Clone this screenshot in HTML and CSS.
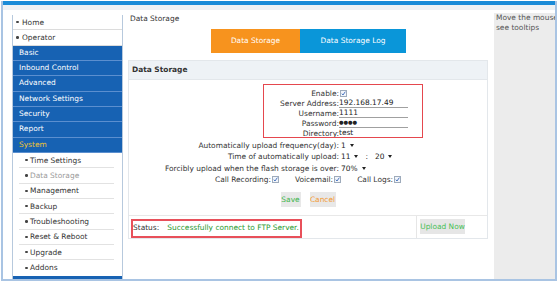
FILE: index.html
```html
<!DOCTYPE html>
<html>
<head>
<meta charset="utf-8">
<link rel="stylesheet" href="styles.css">
</head>
<body>
<div class="screen">
  <div class="topbar"></div>
  <div class="topstrip"></div>
  <div class="content">
    <nav class="sidebar">
      <div class="item top">Home</div>
      <div class="item top">Operator</div>
      <div class="group">Basic</div>
      <div class="group">Inbound Control</div>
      <div class="group">Advanced</div>
      <div class="group">Network Settings</div>
      <div class="group">Security</div>
      <div class="group">Report</div>
      <div class="group active">System</div>
      <div class="item sub">Time Settings</div>
      <div class="item sub current">Data Storage</div>
      <div class="item sub">Management</div>
      <div class="item sub">Backup</div>
      <div class="item sub">Troubleshooting</div>
      <div class="item sub">Reset &amp; Reboot</div>
      <div class="item sub">Upgrade</div>
      <div class="item sub last">Addons</div>
      <div class="group"></div>
    </nav>
    <main class="main">
      <div class="title">Data Storage</div>
      <div class="tabs">
        <div class="tab on">Data Storage</div>
        <div class="tab log">Data Storage Log</div>
      </div>
      <section class="panel">
        <div class="panel-head">Data Storage</div>
        <div class="panel-body">
          <div class="row"><span class="l">Enable:</span><span class="v"><span class="cb first"><svg viewBox="0 0 6 6"><path d="M1 3.2 L2.4 4.8 L5.2 0.8" fill="none" stroke="#2a5db5" stroke-width="1"/></svg></span></span></div>
          <div class="row"><span class="l">Server Address:</span><span class="v"><span class="inp">192.168.17.49</span></span></div>
          <div class="row"><span class="l">Username:</span><span class="v"><span class="inp">1111</span></span></div>
          <div class="row"><span class="l">Password:</span><span class="v"><span class="inp"><span class="dots">●●●●</span></span></span></div>
          <div class="row"><span class="l">Directory:</span><span class="v"><span class="inp">test</span></span></div>
          <div class="row sel gap"><span class="l">Automatically upload frequency(day):</span><span class="v"><span class="select">1<i class="tri"></i></span></span></div>
          <div class="row sel"><span class="l">Time of automatically upload:</span><span class="v"><span class="select">11<i class="tri"></i></span><span class="colon">:</span><span class="select">20<i class="tri"></i></span></span></div>
          <div class="row sel"><span class="l">Forcibly upload when the flash storage is over:</span><span class="v"><span class="select">70%<i class="tri"></i></span></span></div>
          <div class="checks">
            <span>Call Recording:<span class="cb"><svg viewBox="0 0 6 6"><path d="M1 3.2 L2.4 4.8 L5.2 0.8" fill="none" stroke="#2a5db5" stroke-width="1"/></svg></span></span>
            <span>Voicemail:<span class="cb"><svg viewBox="0 0 6 6"><path d="M1 3.2 L2.4 4.8 L5.2 0.8" fill="none" stroke="#2a5db5" stroke-width="1"/></svg></span></span>
            <span>Call Logs:<span class="cb"><svg viewBox="0 0 6 6"><path d="M1 3.2 L2.4 4.8 L5.2 0.8" fill="none" stroke="#2a5db5" stroke-width="1"/></svg></span></span>
          </div>
          <div class="btns">
            <span class="btn save">Save</span>
            <span class="btn cancel">Cancel</span>
          </div>
        </div>
        <div class="status">
          <div class="status-cell"><span class="status-label">Status:</span><span class="status-text">Successfully connect to FTP Server.</span></div>
          <div class="upload-cell"><span class="btn upload">Upload Now</span></div>
        </div>
        <div class="mark mark-form"></div>
        <div class="mark mark-status"></div>
      </section>
    </main>
    <aside class="tips">Move the mouse over the items to<br>see tooltips</aside>
  </div>
</div>
</body>
</html>
```

FILE: styles.css
```css
* { box-sizing: border-box; }
html, body { margin: 0; padding: 0; }
body {
  width: 560px;
  height: 283px;
  overflow: hidden;
  background: #fff;
  font-family: "DejaVu Sans", Verdana, sans-serif;
  font-size: 7.45px;
  color: #333;
}
.screen {
  margin: 1px 0 0 1px;
  width: 556px;
  height: 280px;
  border-left: 2px solid #a9c4e3;
  border-right: 2px solid #a9c4e3;
  border-bottom: 2px solid #a9c4e3;
  display: flex;
  flex-direction: column;
  overflow: hidden;
}
.topbar { height: 4px; background: #1a8bd8; flex: none; }
.topstrip { height: 5px; background: #eef1f4; flex: none; }
.content { display: flex; flex: 1; min-height: 0; }

/* sidebar */
.sidebar {
  flex: none;
  width: 111px;
  margin: 5px 0 0 9px;
  border-left: 1px solid #b7c9dd;
  border-right: 1px solid #b7c9dd;
  overflow: hidden;
}
.group {
  height: 15.33px;
  line-height: 14.33px;
  background: #1762b3;
  color: #fff;
  padding-left: 6px;
  border-bottom: 1px solid #5b8fcf;
}
.group.active { color: #f0c232; }
.item {
  height: 15.33px;
  display: flex;
  align-items: center;
  background: #fff;
  color: #333;
}
.item::before {
  content: "";
  width: 2.5px;
  height: 2.5px;
  border-radius: 50%;
  background: #444;
  margin-right: 3.5px;
  flex: none;
}
.item.top { padding-left: 3px; border-bottom: 1px solid #dcdcdc; }
.item.sub {
  margin: 0 8px 0 6px;
  padding-left: 6px;
  border-bottom: 1px solid #e2e2e2;
}
.item.sub::before { margin-right: 2.5px; }
.item.sub.last { border-bottom: none; }
.item.current { color: #9a9a9a; }

/* main */
.main { flex: none; width: 371px; }
.title { margin-top: 4px; padding-left: 7px; line-height: 10px; color: #333; }
.tabs { display: flex; justify-content: center; margin-top: 5px; height: 24px; }
.tab { line-height: 24px; color: #fff; text-align: center; }
.tab.on { width: 89px; background: #f7931e; }
.tab.log { width: 106px; background: #0a96d9; }

.panel {
  position: relative;
  margin: 7px 0 0 5px;
  width: 360px;
  border: 1px solid #e3e7eb;
}
.panel-head {
  height: 19px;
  line-height: 18px;
  background: #eef2f6;
  border-bottom: 1px solid #e3e7eb;
  font-weight: bold;
  padding-left: 3px;
  color: #333;
}
.panel-body {
  padding: 8px 0 8px;
  border-bottom: 1px solid #e8e8e8;
}
.row { display: flex; align-items: center; height: 10px; }
.row.sel { height: 11.3px; }
.row.gap { margin-top: 2px; }
.row .l { width: 210px; text-align: right; flex: none; }
.row .v { display: flex; align-items: center; }
.inp {
  display: inline-block;
  width: 69px;
  line-height: 9px;
  height: 10px;
  border-bottom: 1px solid #a0a0a0;
  color: #222;
}
.dots { font-size: 5.2px; vertical-align: top; line-height: 9px; }
.cb {
  display: inline-block;
  width: 7px;
  height: 7px;
  border: 1px solid #9eabbb;
  background: #f2f5fa;
  vertical-align: -1px;
  margin-left: 1px;
}
.cb svg { display: block; width: 5px; height: 5px; }
.cb.first { margin-left: 1px; }
.select {
  display: inline-flex;
  align-items: center;
  padding: 0 2px;
  color: #222;
}
.tri {
  display: inline-block;
  width: 0;
  height: 0;
  border-left: 2px solid transparent;
  border-right: 2px solid transparent;
  border-top: 3px solid #222;
  margin-left: 4px;
}
.colon { margin: 0 5px 0 5px; }
.checks {
  display: flex;
  justify-content: center;
  align-items: center;
  gap: 16px;
  height: 10.5px;
}
.btns {
  display: flex;
  justify-content: center;
  gap: 9px;
  margin-top: 7.5px;
}
.btn {
  display: inline-block;
  height: 15px;
  line-height: 15px;
  background: #e8e8e8;
  text-align: center;
}
.btn.save { width: 20px; color: #3db54a; }
.btn.cancel { width: 26px; color: #f39a34; }

.status { display: flex; height: 22px; }
.status-cell {
  width: 288px;
  display: flex;
  align-items: center;
  padding: 2px 0 0 4px;
  border-right: 1px solid #e6e6e6;
}
.status-label { margin-right: 8px; color: #333; }
.status-text { color: #2a9a2f; }
.upload-cell { display: flex; align-items: center; padding-left: 3px; }
.btn.upload { width: 45px; color: #47bf55; background: #e6e6e6; }

.mark { position: absolute; border: 1.5px solid #e5474e; }
.mark-form { left: 134px; top: 23px; width: 160px; height: 54px; }
.mark-status { left: 2px; top: 158px; width: 171px; height: 19px; border: 2px solid #e8505a; }

/* tips */
.tips {
  flex: 1;
  margin-top: 3px;
  padding-left: 2px;
  background: #ececec;
  white-space: nowrap;
  overflow: hidden;
  line-height: 10px;
  color: #555;
}
```
